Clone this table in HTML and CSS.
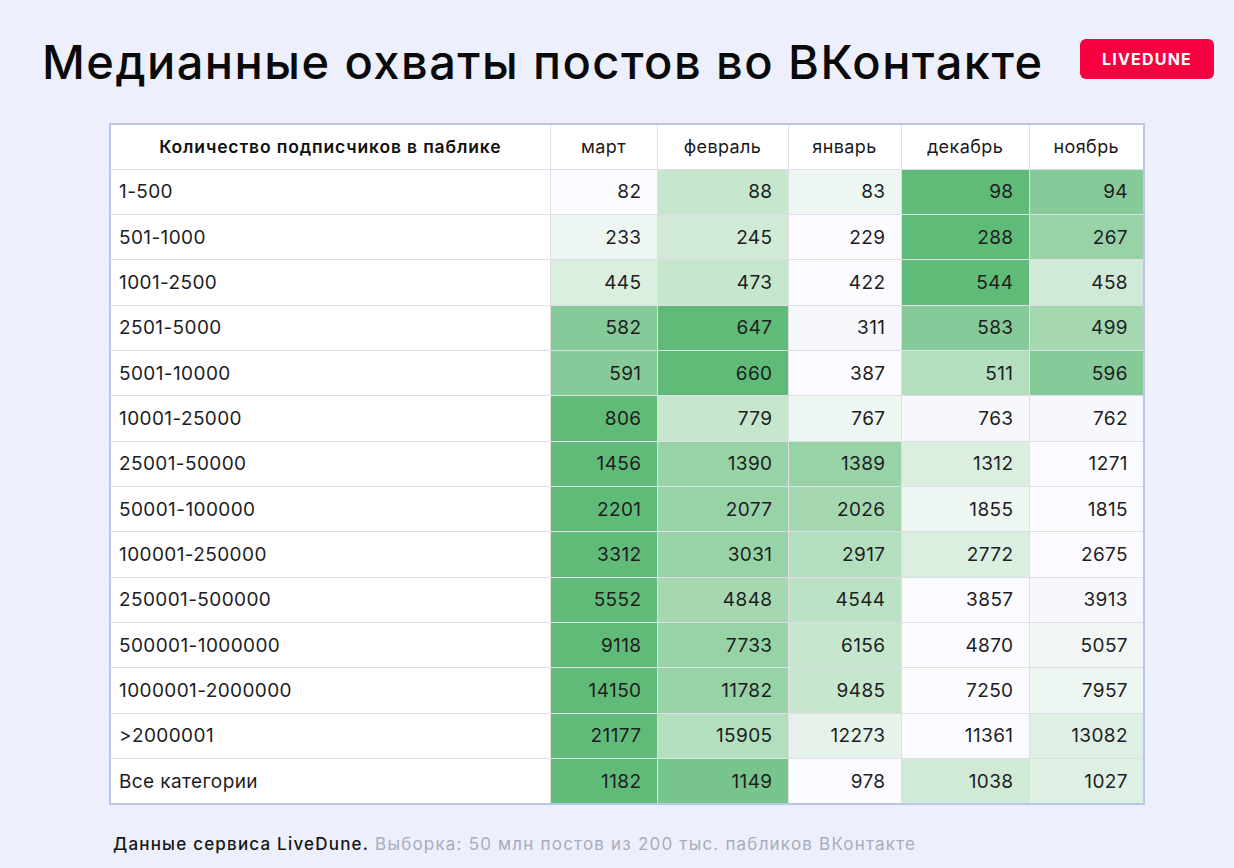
FILE: index.html
```html
<!DOCTYPE html>
<html lang="ru">
<head>
<meta charset="utf-8">
<title>Медианные охваты постов во ВКонтакте</title>
<link rel="stylesheet" href="styles.css">
</head>
<body>
<div class="page">
  <header class="top">
    <h1 class="title">Медианные охваты постов во ВКонтакте</h1>
    <div class="logo">LIVEDUNE</div>
  </header>
  <table class="grid">
    <colgroup>
      <col class="c0"><col class="c1"><col class="c2"><col class="c3"><col class="c4"><col class="c5">
    </colgroup>
    <thead>
      <tr><th class="first">Количество подписчиков в паблике</th><th>март</th><th>февраль</th><th>январь</th><th>декабрь</th><th>ноябрь</th></tr>
    </thead>
    <tbody>
      <tr><td>1-500</td><td class="n w0">82</td><td class="n g4">88</td><td class="n g6">83</td><td class="n g1">98</td><td class="n g2">94</td></tr>
      <tr><td>501-1000</td><td class="n g6">233</td><td class="n g5">245</td><td class="n w0">229</td><td class="n g1">288</td><td class="n g2b">267</td></tr>
      <tr><td>1001-2500</td><td class="n g5b">445</td><td class="n g4">473</td><td class="n w0">422</td><td class="n g1">544</td><td class="n g5">458</td></tr>
      <tr><td>2501-5000</td><td class="n g2">582</td><td class="n g1">647</td><td class="n w1">311</td><td class="n g2">583</td><td class="n g3">499</td></tr>
      <tr><td>5001-10000</td><td class="n g2">591</td><td class="n g1">660</td><td class="n w0">387</td><td class="n g3b">511</td><td class="n g2">596</td></tr>
      <tr><td>10001-25000</td><td class="n g1">806</td><td class="n g4">779</td><td class="n g6">767</td><td class="n w1">763</td><td class="n w1">762</td></tr>
      <tr><td>25001-50000</td><td class="n g1">1456</td><td class="n g2b">1390</td><td class="n g2b">1389</td><td class="n g5b">1312</td><td class="n w0">1271</td></tr>
      <tr><td>50001-100000</td><td class="n g1">2201</td><td class="n g2b">2077</td><td class="n g3">2026</td><td class="n g6">1855</td><td class="n w0">1815</td></tr>
      <tr><td>100001-250000</td><td class="n g1">3312</td><td class="n g2b">3031</td><td class="n g3b">2917</td><td class="n g5b">2772</td><td class="n w0">2675</td></tr>
      <tr><td>250001-500000</td><td class="n g1">5552</td><td class="n g3">4848</td><td class="n g4b">4544</td><td class="n w0">3857</td><td class="n w1">3913</td></tr>
      <tr><td>500001-1000000</td><td class="n g1">9118</td><td class="n g2b">7733</td><td class="n g4">6156</td><td class="n w0">4870</td><td class="n w2">5057</td></tr>
      <tr><td>1000001-2000000</td><td class="n g1">14150</td><td class="n g2b">11782</td><td class="n g4">9485</td><td class="n w0">7250</td><td class="n g6">7957</td></tr>
      <tr><td>&gt;2000001</td><td class="n g1">21177</td><td class="n g3b">15905</td><td class="n g6b">12273</td><td class="n w0">11361</td><td class="n g5c">13082</td></tr>
      <tr><td>Все категории</td><td class="n g1">1182</td><td class="n g1b">1149</td><td class="n w0">978</td><td class="n g5">1038</td><td class="n g5c">1027</td></tr>
    </tbody>
  </table>
  <p class="note"><span class="src">Данные сервиса LiveDune.</span> Выборка: 50 млн постов из 200 тыс. пабликов ВКонтакте</p>
</div>
</body>
</html>
```
FILE: styles.css
```css
html, body {
  margin: 0;
  padding: 0;
  background: #edf0fc;
}
.page {
  width: 1234px;
  height: 868px;
  box-sizing: border-box;
  padding: 32px 20px 0 42px;
  font-family: Inter, "Noto Sans", sans-serif;
  color: #111;
}
.top {
  display: flex;
  align-items: flex-start;
  justify-content: space-between;
}
.title {
  margin: 0;
  font-family: Inter, "Noto Sans", sans-serif;
  font-weight: 500;
  font-size: 47px;
  line-height: 60px;
  letter-spacing: 1.45px;
  color: #0a0a0a;
  white-space: nowrap;
}
.logo {
  margin-top: 7px;
  width: 134px;
  height: 40px;
  border-radius: 6px;
  background: #f6003f;
  color: #fff;
  font-family: Inter, sans-serif;
  font-weight: 700;
  font-size: 16px;
  letter-spacing: 1.2px;
  display: flex;
  align-items: center;
  justify-content: center;
}
.grid {
  margin: 31px 0 0 67px;
  border-collapse: collapse;
  table-layout: fixed;
  width: 1036px;
  border: 2px solid #b9c7ec;
  background: #fff;
  font-family: Inter, "Noto Sans", sans-serif;
}
.c0 { width: 440px; }
.c1 { width: 107px; }
.c2 { width: 131px; }
.c3 { width: 113px; }
.c4 { width: 128px; }
.c5 { width: 115px; }
.grid th, .grid td {
  border: 1px solid #dedfe6;
  height: 45.33px;
  padding: 0;
  box-sizing: border-box;
}
.grid th {
  font-weight: 400;
  font-size: 18px;
  letter-spacing: 0.4px;
  color: #1a1a1a;
  text-align: center;
}
.grid th.first {
  font-weight: 600;
  font-size: 17.5px;
  letter-spacing: 0.85px;
  color: #111;
}
.grid td {
  font-size: 19px;
  letter-spacing: 0.4px;
  color: #1d1d1f;
  padding-left: 8px;
}
.grid td.n {
  text-align: right;
  padding: 0 15px 0 0;
}
.w0 { background: #fcfbff; }
.w1 { background: #f7f8fb; }
.w2 { background: #f2f6f5; }
.g1 { background: #61bb78; }
.g1b { background: #77c48c; }
.g2 { background: #85ca98; }
.g2b { background: #98d2a7; }
.g3 { background: #a5d8b1; }
.g3b { background: #b3dfbe; }
.g4 { background: #c6e7ce; }
.g4b { background: #bce2c5; }
.g5 { background: #d0ead7; }
.g5b { background: #dbefe1; }
.g5c { background: #deefe3; }
.g6 { background: #eef6f1; }
.g6b { background: #e6f2ea; }
.note {
  margin: 29px 0 0 71px;
  font-size: 17px;
  letter-spacing: 1.2px;
  color: #a9acb9;
}
.src {
  color: #151515;
  font-weight: 500;
}
```
